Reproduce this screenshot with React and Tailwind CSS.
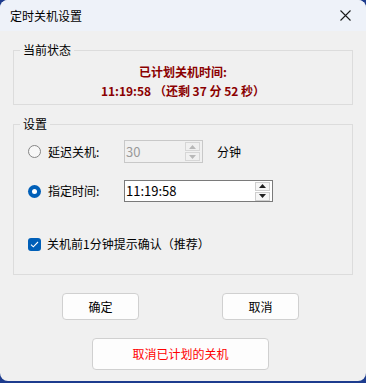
import React from 'react';

const font = { fontFamily: '"Noto Sans CJK SC", "Noto Sans", sans-serif' };

const SpinButtons = ({ disabled }) => {
    const c = disabled ? '#b8b8b8' : '#202020';
    return (
        <div className="flex flex-col gap-[1px] pr-[2px]">
            <div className={`w-[15px] h-[9px] flex items-center justify-center border ${disabled ? 'border-[#d6d6d6] bg-[#f0f0f0]' : 'border-[#cfcfcf] bg-[#f6f6f6]'}`}>
                <svg width="7" height="4" viewBox="0 0 7 4"><path d="M0 4 L3.5 0 L7 4 Z" fill={c} /></svg>
            </div>
            <div className={`w-[15px] h-[9px] flex items-center justify-center border ${disabled ? 'border-[#d6d6d6] bg-[#f0f0f0]' : 'border-[#cfcfcf] bg-[#f6f6f6]'}`}>
                <svg width="7" height="4" viewBox="0 0 7 4"><path d="M0 0 L3.5 4 L7 0 Z" fill={c} /></svg>
            </div>
        </div>
    );
};

const Radio = ({ checked }) => (
    checked ? (
        <div className="w-[13px] h-[13px] rounded-full bg-[#005fb8] flex items-center justify-center">
            <div className="w-[5px] h-[5px] rounded-full bg-white" />
        </div>
    ) : (
        <div className="w-[13px] h-[13px] rounded-full border border-[#858585] bg-[#f7f7f7]" />
    )
);

const App = () => {
    return (
        <div className="w-[366px] h-[383px] bg-[#1d3c8e]" style={font}>
            <div className="w-[366px] h-[381px] rounded-[8px] overflow-hidden bg-[#f0f0f0] flex flex-col text-[12px] text-[#1a1a1a]">
                <div className="h-[31px] bg-[#eef2f9] flex items-center justify-between pl-[10px] pr-[10px] shrink-0">
                    <span className="leading-[16px] text-black">定时关机设置</span>
                    <svg width="11" height="11" viewBox="0 0 11 11" className="mr-[5px]">
                        <path d="M0.5 0.5 L10.5 10.5 M10.5 0.5 L0.5 10.5" stroke="#1a1a1a" strokeWidth="1.1" />
                    </svg>
                </div>

                <fieldset className="mx-[13px] mt-[11px] border border-[#dcdcdc] px-0 pt-[4px] pb-[4px] min-w-0">
                    <legend className="ml-[6px] px-[3px] leading-[16px] text-black">当前状态</legend>
                    <div className="flex flex-col items-center font-bold text-[#8b0000] leading-[19px]">
                        <span>已计划关机时间:</span>
                        <span>11:19:58 （还剩 37 分 52 秒）</span>
                    </div>
                </fieldset>

                <fieldset className="mx-[13px] mt-[11px] border border-[#dcdcdc] pl-[14px] pt-[8px] pb-[22px] min-w-0">
                    <legend className="ml-[-8px] px-[3px] leading-[16px] text-black">设置</legend>
                    <div className="flex items-center h-[23px]">
                        <Radio />
                        <span className="ml-[7px] w-[76px] leading-[16px] text-black">延迟关机:</span>
                        <div className="w-[79px] h-[23px] border border-[#c8c8c8] bg-[#f0f0f0] flex items-center justify-between">
                            <span className="pl-[1px] text-[#9a9a9a] leading-[16px] text-[13px]">30</span>
                            <SpinButtons disabled />
                        </div>
                        <span className="ml-[14px] leading-[16px] text-black">分钟</span>
                    </div>
                    <div className="flex items-center h-[22px] mt-[17px]">
                        <Radio checked />
                        <span className="ml-[7px] w-[76px] leading-[16px] text-black">指定时间:</span>
                        <div className="w-[149px] h-[22px] border border-[#7a7a7a] bg-white flex items-center justify-between">
                            <span className="pl-[1px] text-black leading-[16px] text-[13px]">11:19:58</span>
                            <SpinButtons />
                        </div>
                    </div>
                    <div className="flex items-center h-[16px] mt-[34px]">
                        <div className="w-[13px] h-[13px] rounded-[3px] bg-[#005fb8] flex items-center justify-center">
                            <svg width="9" height="7" viewBox="0 0 9 7">
                                <path d="M1 3.6 L3.3 5.8 L8 1" stroke="white" strokeWidth="1.1" fill="none" />
                            </svg>
                        </div>
                        <span className="ml-[6px] leading-[16px] text-black">关机前1分钟提示确认（推荐）</span>
                    </div>
                </fieldset>

                <div className="flex pl-[62px] mt-[18px] gap-[83px]">
                    <button className="w-[77px] h-[27px] rounded-[4px] border border-[#d0d0d0] bg-[#fdfdfd] text-black leading-[16px]">确定</button>
                    <button className="w-[77px] h-[27px] rounded-[4px] border border-[#d0d0d0] bg-[#fdfdfd] text-black leading-[16px]">取消</button>
                </div>
                <div className="flex pl-[92px] mt-[18px]">
                    <button className="w-[177px] h-[32px] rounded-[4px] border border-[#d0d0d0] bg-[#fdfdfd] text-[#ff0000] leading-[16px]">取消已计划的关机</button>
                </div>
            </div>
        </div>
    );
};

export default App;
